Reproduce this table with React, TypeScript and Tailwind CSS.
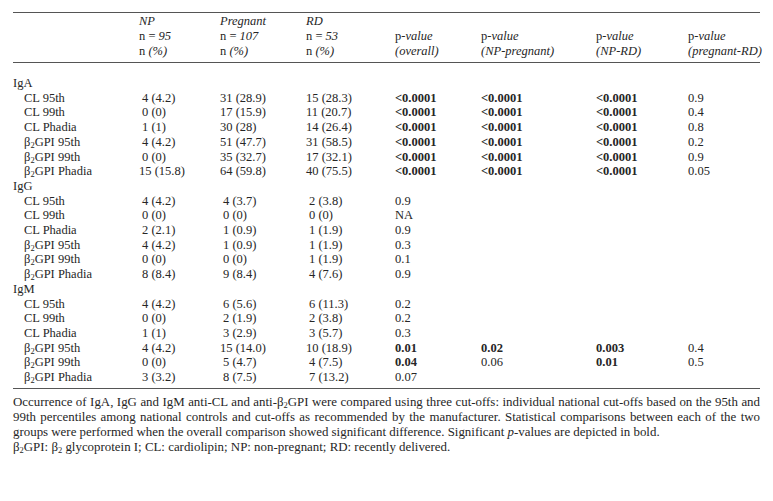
import React from 'react';

type Row = {
  label: React.ReactNode;
  np: string;
  preg: string;
  rd: string;
  p: [string, string, string, string];
  bold: [boolean, boolean, boolean, boolean];
};

const Sub = () => (
  <sub className="text-[8.5px] leading-none align-baseline relative top-[2px]">2</sub>
);

const B2 = () => (
  <>
    β<Sub />GPI
  </>
);

const L = '<0.0001';
const allSig: [boolean, boolean, boolean, boolean] = [true, true, true, false];
const none: [boolean, boolean, boolean, boolean] = [false, false, false, false];

const groups: { name: string; rows: Row[] }[] = [
  {
    name: 'IgA',
    rows: [
      { label: 'CL 95th', np: '4 (4.2)', preg: '31 (28.9)', rd: '15 (28.3)', p: [L, L, L, '0.9'], bold: allSig },
      { label: 'CL 99th', np: '0 (0)', preg: '17 (15.9)', rd: '11 (20.7)', p: [L, L, L, '0.4'], bold: allSig },
      { label: 'CL Phadia', np: '1 (1)', preg: '30 (28)', rd: '14 (26.4)', p: [L, L, L, '0.8'], bold: allSig },
      { label: <><B2 /> 95th</>, np: '4 (4.2)', preg: '51 (47.7)', rd: '31 (58.5)', p: [L, L, L, '0.2'], bold: allSig },
      { label: <><B2 /> 99th</>, np: '0 (0)', preg: '35 (32.7)', rd: '17 (32.1)', p: [L, L, L, '0.9'], bold: allSig },
      { label: <><B2 /> Phadia</>, np: '15 (15.8)', preg: '64 (59.8)', rd: '40 (75.5)', p: [L, L, L, '0.05'], bold: allSig },
    ],
  },
  {
    name: 'IgG',
    rows: [
      { label: 'CL 95th', np: '4 (4.2)', preg: '4 (3.7)', rd: '2 (3.8)', p: ['0.9', '', '', ''], bold: none },
      { label: 'CL 99th', np: '0 (0)', preg: '0 (0)', rd: '0 (0)', p: ['NA', '', '', ''], bold: none },
      { label: 'CL Phadia', np: '2 (2.1)', preg: '1 (0.9)', rd: '1 (1.9)', p: ['0.9', '', '', ''], bold: none },
      { label: <><B2 /> 95th</>, np: '4 (4.2)', preg: '1 (0.9)', rd: '1 (1.9)', p: ['0.3', '', '', ''], bold: none },
      { label: <><B2 /> 99th</>, np: '0 (0)', preg: '0 (0)', rd: '1 (1.9)', p: ['0.1', '', '', ''], bold: none },
      { label: <><B2 /> Phadia</>, np: '8 (8.4)', preg: '9 (8.4)', rd: '4 (7.6)', p: ['0.9', '', '', ''], bold: none },
    ],
  },
  {
    name: 'IgM',
    rows: [
      { label: 'CL 95th', np: '4 (4.2)', preg: '6 (5.6)', rd: '6 (11.3)', p: ['0.2', '', '', ''], bold: none },
      { label: 'CL 99th', np: '0 (0)', preg: '2 (1.9)', rd: '2 (3.8)', p: ['0.2', '', '', ''], bold: none },
      { label: 'CL Phadia', np: '1 (1)', preg: '3 (2.9)', rd: '3 (5.7)', p: ['0.3', '', '', ''], bold: none },
      { label: <><B2 /> 95th</>, np: '4 (4.2)', preg: '15 (14.0)', rd: '10 (18.9)', p: ['0.01', '0.02', '0.003', '0.4'], bold: [true, true, true, false] },
      { label: <><B2 /> 99th</>, np: '0 (0)', preg: '5 (4.7)', rd: '4 (7.5)', p: ['0.04', '0.06', '0.01', '0.5'], bold: [true, false, true, false] },
      { label: <><B2 /> Phadia</>, np: '3 (3.2)', preg: '8 (7.5)', rd: '7 (13.2)', p: ['0.07', '', '', ''], bold: none },
    ],
  },
];

const cols = 'grid grid-cols-[126px_81px_86px_89px_86px_115px_92px_1fr]';

const Count = ({ v }: { v: string }) => (
  <div className={v.split(' ')[0].length === 1 ? 'pl-[3px]' : ''}>{v}</div>
);

export default function App() {
  return (
    <div className="w-[773px] h-[501px] bg-white text-[#262626] font-['Liberation_Serif',serif] text-[12.5px] px-[13px] pt-[12px]">
      <div className="border-t border-[#555]" />
      <div className={`${cols} leading-[15px] pt-[1px] pb-[3px] border-b border-[#555] whitespace-nowrap`}>
        <div />
        <div>
          <div className="italic">NP</div>
          <div>n = <i>95</i></div>
          <div>n <i>(%)</i></div>
        </div>
        <div>
          <div className="italic">Pregnant</div>
          <div>n = <i>107</i></div>
          <div>n <i>(%)</i></div>
        </div>
        <div>
          <div className="italic">RD</div>
          <div>n = <i>53</i></div>
          <div>n <i>(%)</i></div>
        </div>
        <div className="pt-[15px]">
          <div>p-<i>value</i></div>
          <div className="italic">(overall)</div>
        </div>
        <div className="pt-[15px]">
          <div>p-<i>value</i></div>
          <div className="italic">(NP-pregnant)</div>
        </div>
        <div className="pt-[15px]">
          <div>p-<i>value</i></div>
          <div className="italic">(NP-RD)</div>
        </div>
        <div className="pt-[15px]">
          <div>p-<i>value</i></div>
          <div className="italic">(pregnant-RD)</div>
        </div>
      </div>
      <div className="pt-[13px] pb-[3px] leading-[14.7px] border-b border-[#555]">
        {groups.map((g) => (
          <React.Fragment key={g.name}>
            <div>{g.name}</div>
            {g.rows.map((r, i) => (
              <div key={i} className={cols}>
                <div className="pl-[11px] whitespace-nowrap">{r.label}</div>
                <Count v={r.np} />
                <Count v={r.preg} />
                <Count v={r.rd} />
                {r.p.map((p, j) => (
                  <div key={j} className={r.bold[j] ? 'font-bold' : ''}>{p}</div>
                ))}
              </div>
            ))}
          </React.Fragment>
        ))}
      </div>
      <div className="pt-[6px] leading-[15px] text-[12.9px]">
        <p className="text-justify">
          Occurrence of IgA, IgG and IgM anti-CL and anti-β<Sub />GPI were compared using three cut-offs: individual national cut-offs based on the 95th and 99th percentiles among national controls and cut-offs as recommended by the manufacturer. Statistical comparisons between each of the two groups were performed when the overall comparison showed significant difference. Significant <i>p</i>-values are depicted in bold.
        </p>
        <p>
          β<Sub />GPI: β<Sub /> glycoprotein I; CL: cardiolipin; NP: non-pregnant; RD: recently delivered.
        </p>
      </div>
    </div>
  );
}
